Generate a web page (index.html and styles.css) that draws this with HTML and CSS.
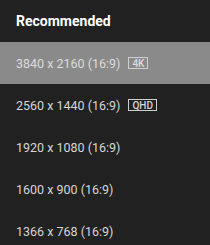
FILE: index.html
```html
<!DOCTYPE html>
<html lang="en">
<head>
  <meta charset="UTF-8">
  <meta name="viewport" content="width=device-width, initial-scale=1.0">
  <title>Resolution</title>
  <link rel="stylesheet" href="styles.css">
</head>
<body>
  <div class="menu">
    <div class="menu-title">Recommended</div>
    <div class="option selected">3840 x 2160 (16:9) <span class="badge">4K</span></div>
    <div class="option">2560 x 1440 (16:9) <span class="badge">QHD</span></div>
    <div class="option">1920 x 1080 (16:9)</div>
    <div class="option">1600 x 900 (16:9)</div>
    <div class="option">1366 x 768 (16:9)</div>
  </div>
</body>
</html>
```

FILE: styles.css
```css
body {
  margin: 0;
  background-color: #212121;
  font-family: Roboto, "Liberation Sans", sans-serif;
}

.menu {
  width: 210px;
  height: 245px;
  overflow: hidden;
}

.menu-title {
  height: 42px;
  display: flex;
  align-items: center;
  padding: 0 16px;
  font-size: 14px;
  font-weight: bold;
  color: #ffffff;
}

.option {
  height: 42px;
  display: flex;
  align-items: center;
  padding: 0 16px;
  font-size: 12.5px;
  color: #d6d6d6;
}

.option.selected {
  background-color: #8a8a8a;
  color: #dcdcdc;
}

.badge {
  margin-left: 8px;
  border: 1px solid #cfcfcf;
  height: 12px;
  box-sizing: border-box;
  display: flex;
  align-items: center;
  padding: 0 3px;
  font-size: 10px;
  font-weight: 500;
}
```
